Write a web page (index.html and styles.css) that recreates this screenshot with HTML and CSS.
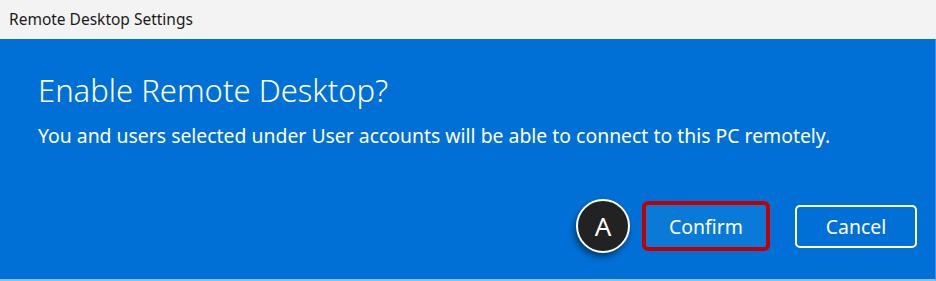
FILE: index.html
```html
<!DOCTYPE html>
<html>
<head>
<meta charset="utf-8">
<link rel="stylesheet" href="styles.css">
</head>
<body>
<div class="window">
  <div class="titlebar">Remote Desktop Settings</div>
  <div class="dialog">
    <h1 class="heading">Enable Remote Desktop?</h1>
    <p class="message">You and users selected under User accounts will be able to connect to this PC remotely.</p>
    <div class="actions">
      <span class="badge">A</span>
      <button class="btn btn-confirm">Confirm</button>
      <button class="btn btn-cancel">Cancel</button>
    </div>
  </div>
</div>
</body>
</html>
```
FILE: styles.css
```css
html, body {
  margin: 0;
  padding: 0;
  background: #f3f3f3;
}
.window {
  width: 936px;
  height: 281px;
  font-family: "Noto Sans", "Open Sans", sans-serif;
  overflow: hidden;
}
.titlebar {
  height: 39px;
  box-sizing: border-box;
  padding: 9px 0 0 9px;
  font-size: 15.5px;
  line-height: 20px;
  color: #1b1b1b;
  background: #f3f3f3;
}
.dialog {
  height: 242px;
  box-sizing: border-box;
  background: #0170d6;
  border-bottom: 2px solid #8fc0ee;
  border-right: 1px solid #3f95e2;
  padding: 0 18px 0 38px;
  color: #ffffff;
}
.heading {
  margin: 0;
  padding-top: 31px;
  font-size: 31px;
  font-weight: 300;
  line-height: 40px;
}
.message {
  margin: 0;
  padding-top: 13px;
  font-size: 19.4px;
  line-height: 26px;
}
.actions {
  display: flex;
  justify-content: flex-end;
  align-items: center;
  margin-top: 50px;
}
.badge {
  width: 50px;
  height: 50px;
  border: 2px solid #ffffff;
  border-radius: 50%;
  background: #222222;
  color: #ffffff;
  font-size: 26px;
  display: flex;
  align-items: center;
  justify-content: center;
  box-shadow: -2px 4px 6px rgba(0, 0, 0, 0.45);
  margin-right: 12px;
}
.btn {
  font-family: inherit;
  color: #ffffff;
  font-size: 19.4px;
  box-sizing: border-box;
  cursor: pointer;
}
.btn-confirm {
  width: 128px;
  height: 50px;
  background: #0a7ad9;
  border: 4px solid #c00000;
  border-radius: 6px;
}
.btn-cancel {
  width: 122px;
  height: 43px;
  margin-left: 25px;
  background: #0170d6;
  border: 2px solid #ffffff;
  border-radius: 5px;
}
```
